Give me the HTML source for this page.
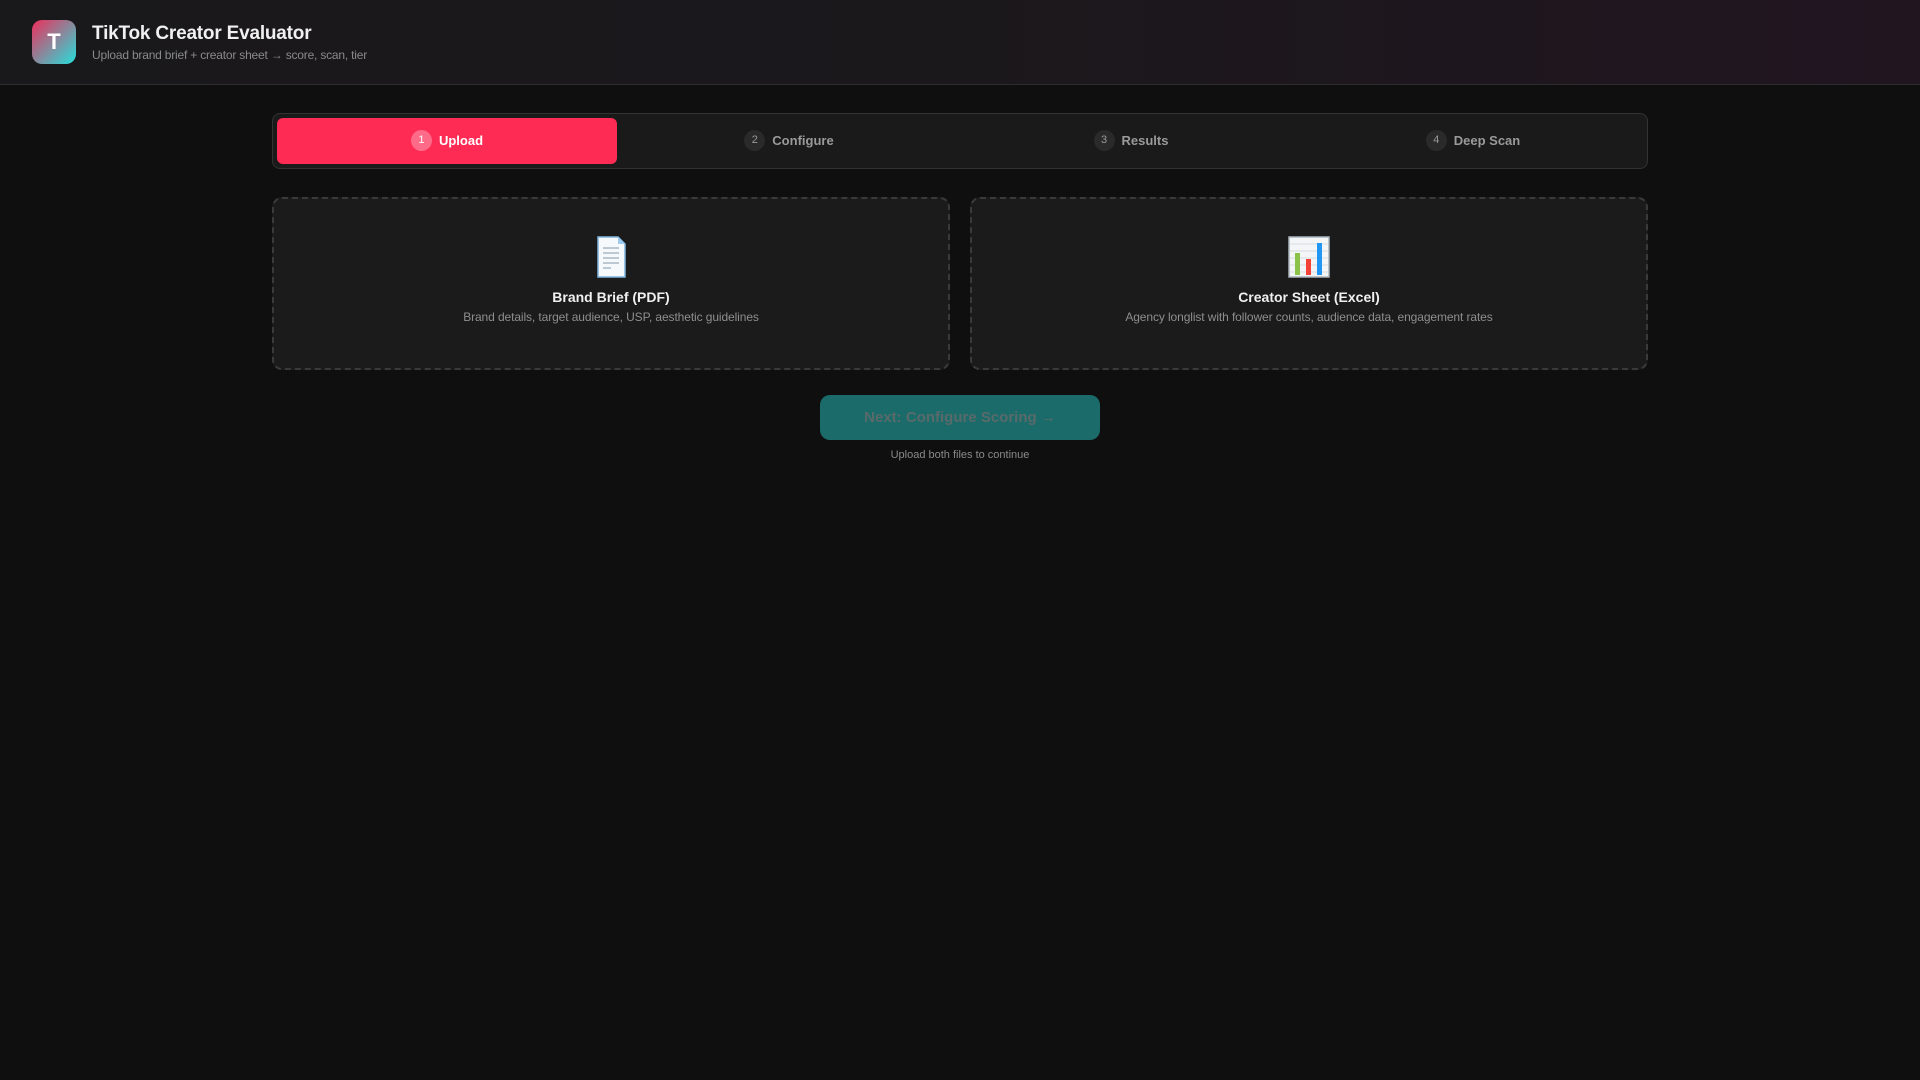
<!DOCTYPE html>
<html><head><meta charset="utf-8"><style>
*{box-sizing:border-box;margin:0;padding:0}
body{width:1920px;height:1080px;background:#0f0f0f;font-family:"Liberation Sans",sans-serif;position:relative;overflow:hidden}
.hdr{position:absolute;left:0;top:0;width:1920px;height:85px;background:linear-gradient(90deg,#19181a 0%,#1b181c 50%,#211520 100%);border-bottom:1px solid #2c2c2c}
.logo{position:absolute;left:32px;top:20px;width:44px;height:44px;border-radius:10px;background:linear-gradient(135deg,#ee2f5b,#25e0dc);color:#fff;font-weight:bold;font-size:22px;text-align:center;line-height:44px}
.t1{position:absolute;left:92px;top:23px;color:#f0f0f0;font-size:19px;font-weight:bold;letter-spacing:-0.2px}
.t2{position:absolute;left:92px;top:48px;color:#8a8a8a;font-size:12px;letter-spacing:-0.2px}
.tabs{position:absolute;left:272px;top:113px;width:1376px;height:56px;border:1px solid #333;border-radius:8px;background:#1a1a1a}
.tab{position:absolute;top:4px;height:46px;width:340px;border-radius:6px;display:flex;align-items:center;justify-content:center;font-size:13px;font-weight:bold;color:#9a9a9a;padding-bottom:2px}
.tab .n{width:21px;height:21px;border-radius:50%;background:#2a2a2a;font-size:11px;display:inline-flex;align-items:center;justify-content:center;margin-right:7px;font-weight:normal}
.tab.a{background:#fe2c55;color:#fff}
.tab.a .n{background:rgba(255,255,255,.3)}
.card{position:absolute;top:197px;width:678px;height:173px;border:2px dashed #3a3a3a;border-radius:10px;background:#1b1b1b;text-align:center}
.card svg{position:absolute;left:50%;top:37px;transform:translateX(-50%)}
.card .h{position:absolute;top:90px;width:100%;color:#f0f0f0;font-weight:bold;font-size:14px}
.card .d{position:absolute;top:111px;width:100%;color:#8e8e8e;font-size:12px;letter-spacing:-0.1px}
.btn{position:absolute;left:820px;top:395px;width:280px;height:45px;border-radius:10px;background:#1a6b6a;color:#5a6a6a;font-weight:bold;font-size:15px;text-align:center;line-height:45px}
.cap{position:absolute;left:0;width:1920px;top:449px;text-align:center;color:#8a8a8a;font-size:11px}
</style></head><body>
<div class="hdr"><div class="logo">T</div><div class="t1">TikTok Creator Evaluator</div><div class="t2">Upload brand brief + creator sheet → score, scan, tier</div></div>
<div class="tabs">
<div class="tab a" style="left:4px"><span class="n">1</span>Upload</div>
<div class="tab" style="left:346px"><span class="n">2</span>Configure</div>
<div class="tab" style="left:688px"><span class="n">3</span>Results</div>
<div class="tab" style="left:1030px"><span class="n">4</span>Deep Scan</div>
</div>
<div class="card" style="left:272px">
<svg width="40" height="42" viewBox="0 0 40 42"><path d="M7 1h20l7 7v33H7z" fill="#f5f9fc" stroke="#7fb6e0" stroke-width="1.5"/><path d="M27 1v7h7" fill="#9ccbef"/><g stroke="#a9b8c4" stroke-width="1.5"><line x1="12" y1="12" x2="28" y2="12"/><line x1="12" y1="17" x2="28" y2="17"/><line x1="12" y1="22" x2="28" y2="22"/><line x1="12" y1="27" x2="28" y2="27"/><line x1="12" y1="32" x2="20" y2="32"/></g></svg>
<div class="h">Brand Brief (PDF)</div><div class="d">Brand details, target audience, USP, aesthetic guidelines</div></div>
<div class="card" style="left:970px">
<svg width="42" height="42" viewBox="0 0 42 42"><rect x="1" y="1" width="40" height="40" fill="#f3f5f7" stroke="#aab4bd" stroke-width="1.5"/><g stroke="#d7dde2"><line x1="2" y1="8" x2="40" y2="8"/><line x1="2" y1="15" x2="40" y2="15"/><line x1="2" y1="22" x2="40" y2="22"/><line x1="2" y1="29" x2="40" y2="29"/><line x1="2" y1="36" x2="40" y2="36"/></g><rect x="7" y="17" width="5" height="22" fill="#8bc34a"/><rect x="18" y="23" width="5" height="16" fill="#f44336"/><rect x="29" y="7" width="5" height="32" fill="#2196f3"/></svg>
<div class="h">Creator Sheet (Excel)</div><div class="d">Agency longlist with follower counts, audience data, engagement rates</div></div>
<div class="btn">Next: Configure Scoring →</div>
<div class="cap">Upload both files to continue</div>
</body></html>
